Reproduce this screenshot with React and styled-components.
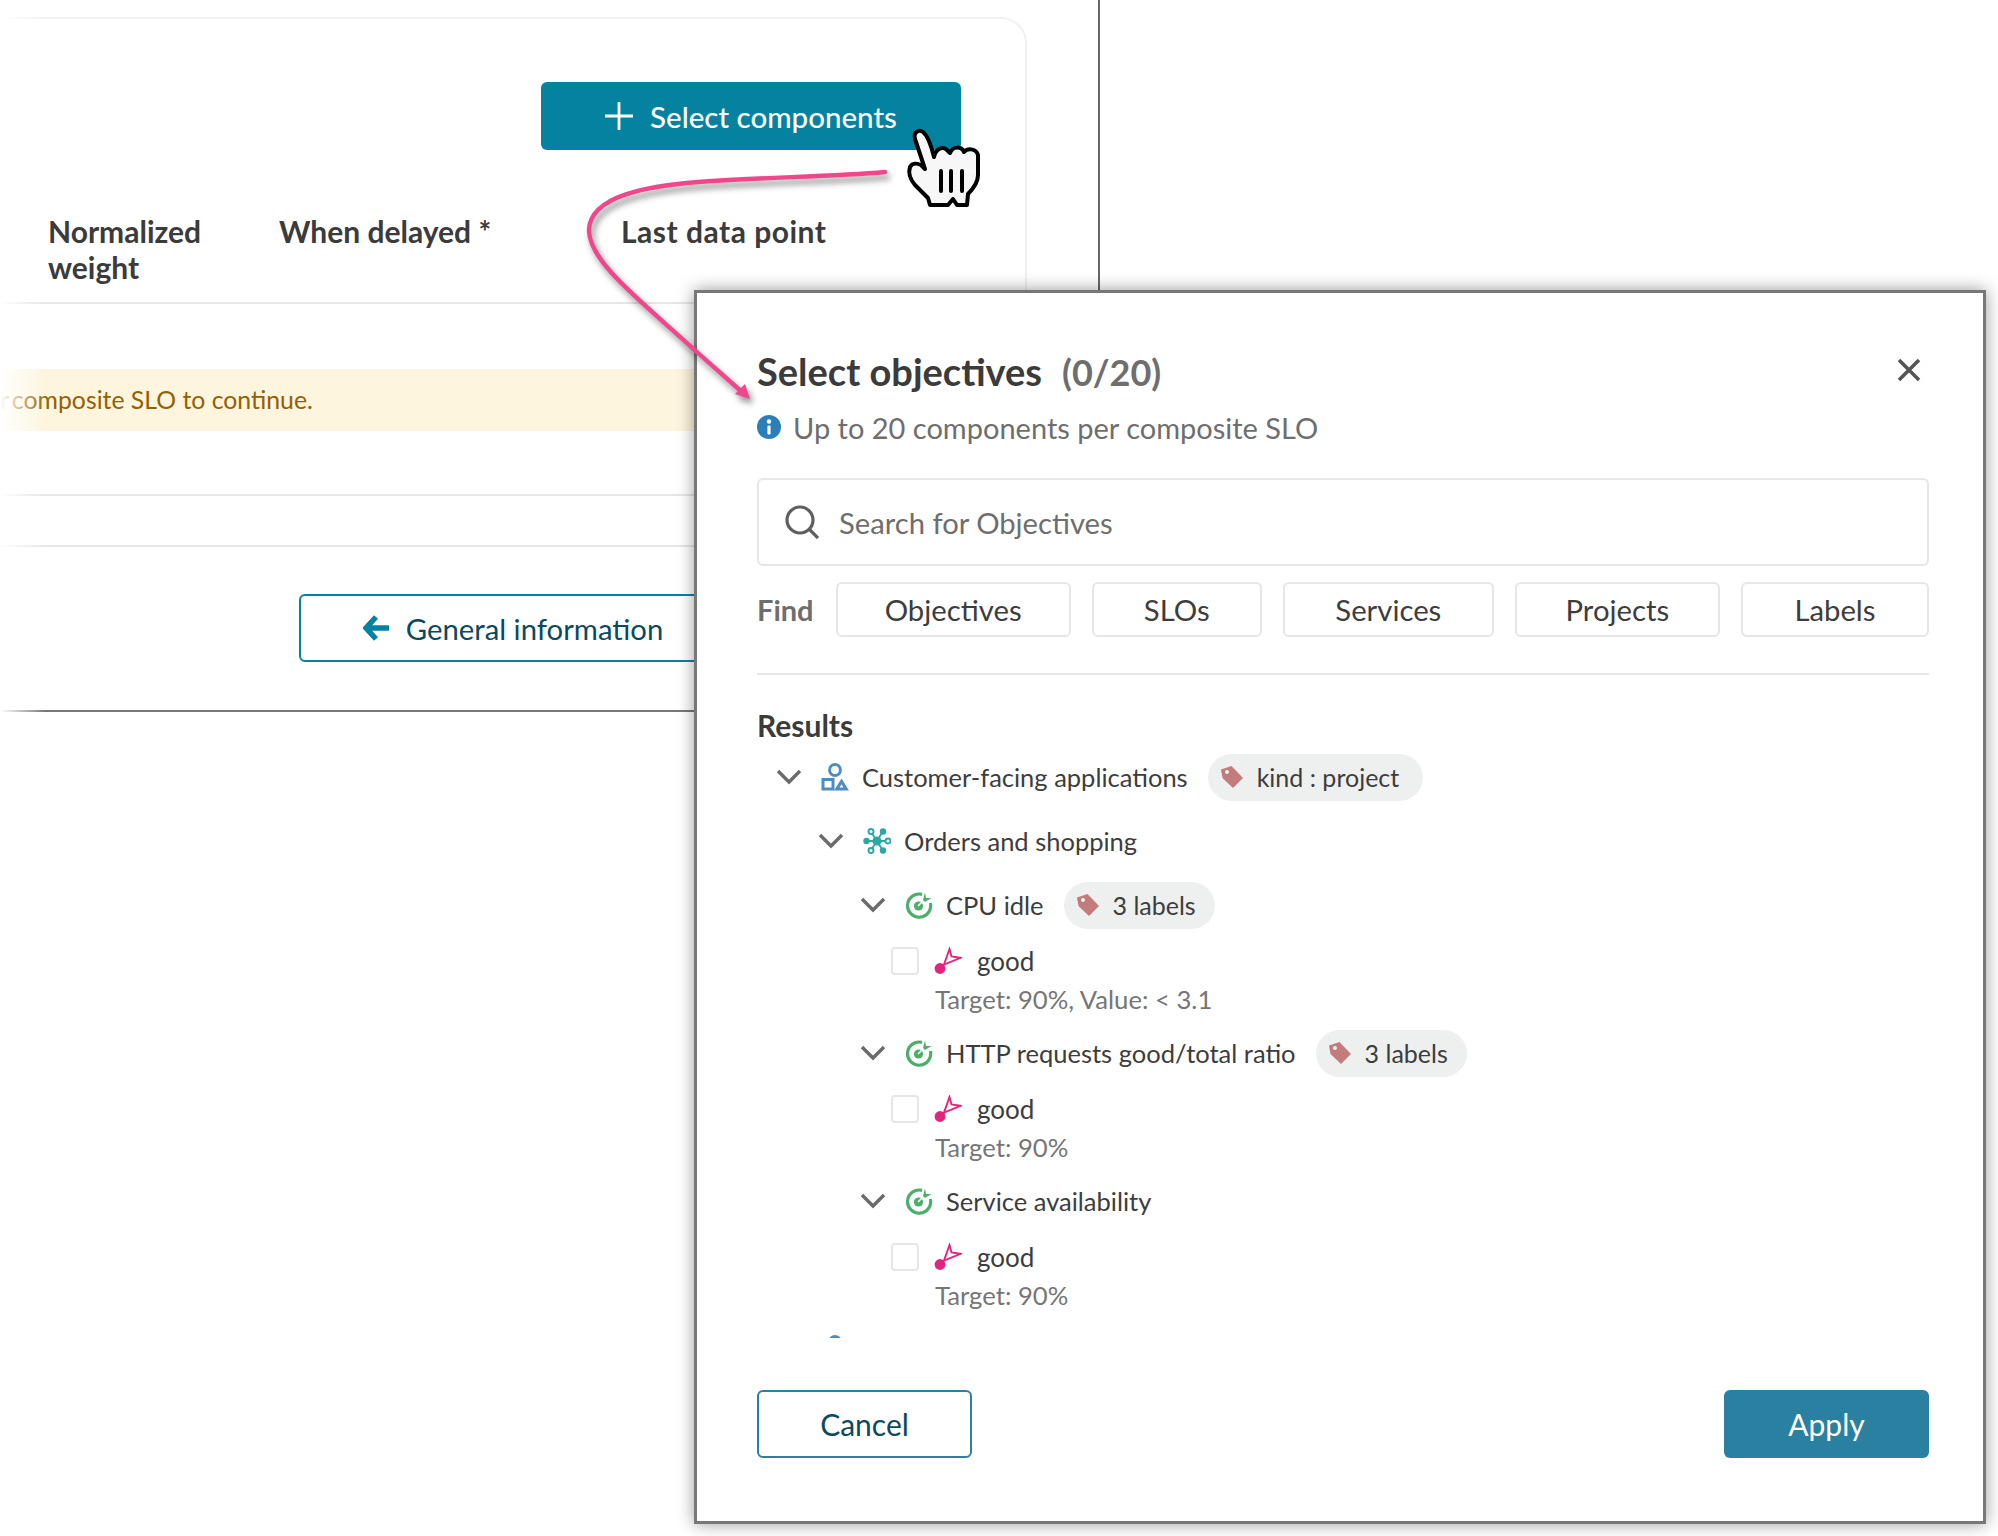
import styled, { createGlobalStyle } from 'styled-components'

const Global = createGlobalStyle`
  html, body {
    margin: 0;
    padding: 0;
    background: #fff;
  }
  * {
    box-sizing: border-box;
  }
  body {
    font-family: "Lato", "Noto Sans", sans-serif;
    color: #3d3d3d;
  }
`

const Page = styled.div`
  position: relative;
  width: 1998px;
  height: 1536px;
  overflow: hidden;
  background: #fff;
`

const Backdrop = styled.div`
  width: 1100px;
  height: 712px;
  padding-top: 17px;
  border-right: 2px solid #666;
  border-bottom: 2px solid #777;
`

const Card = styled.div`
  width: 1027px;
  height: 693px;
  border-top: 2px solid #f2f2f2;
  border-right: 2px solid #f0f0f0;
  border-top-right-radius: 26px;
  display: flex;
  flex-direction: column;
`

const ActionBar = styled.div`
  display: flex;
  justify-content: flex-end;
  padding: 63px 64px 0 0;
`

const PrimaryAdd = styled.div`
  width: 420px;
  height: 68px;
  border-radius: 6px;
  background: #04829f;
  color: #fff;
  font-size: 29.5px;
  font-weight: 500;
  display: flex;
  align-items: center;
  justify-content: center;
  gap: 17px;
`

const TableHead = styled.div`
  display: grid;
  grid-template-columns: 231px 342px 1fr;
  padding: 63px 0 17px 48px;
  border-bottom: 2px solid #e6e6e6;
  font-size: 30px;
  font-weight: 700;
  line-height: 36px;
  color: #3b3b3b;
`

const HeadCell = styled.div`
  letter-spacing: ${(p) => p.$track || 0}px;
`

const Banner = styled.div`
  margin-top: 65px;
  height: 62px;
  padding-bottom: 2px;
  background: #fef5df;
  color: #946000;
  font-size: 24.8px;
  white-space: pre;
  display: flex;
  align-items: center;
`

const BannerCut = styled.span`
  margin-right: -3px;
`

const Rule = styled.div`
  height: 2px;
  background: #e6e6e6;
  margin-top: ${(p) => p.$gap}px;
`

const BackRow = styled.div`
  padding: 47px 0 0 299px;
`

const BackButton = styled.div`
  width: 428px;
  height: 68px;
  border: 2px solid #04829f;
  border-radius: 6px;
  color: #0a4a60;
  font-size: 29.3px;
  display: flex;
  align-items: center;
  justify-content: center;
  gap: 17px;
`

const FadeEdge = styled.div`
  position: absolute;
  left: 0;
  top: 0;
  width: 46px;
  height: 720px;
  background: linear-gradient(90deg, #fff 0%, rgba(255, 255, 255, 0) 100%);
`

const Modal = styled.div`
  position: absolute;
  left: 694px;
  top: 290px;
  width: 1292px;
  height: 1234px;
  padding: 58px 54px 0 60px;
  background: #fff;
  border: 3px solid #777;
  box-shadow: 0 0 16px rgba(0, 0, 0, 0.4);
  display: flex;
  flex-direction: column;
`

const TitleRow = styled.div`
  display: flex;
  align-items: center;
  justify-content: space-between;
  height: 40px;
`

const Title = styled.div`
  font-size: 38px;
  font-weight: 700;
  color: #3b3b3b;
  span {
    margin-left: 20px;
    color: #6e6e6e;
    font-size: 36px;
  }
`

const Close = styled.svg`
  width: 26px;
  height: 26px;
  margin: 0 7px 3px 0;
`

const Hint = styled.div`
  display: flex;
  align-items: center;
  gap: 12px;
  height: 36px;
  margin-top: 18px;
  font-size: 29px;
  color: #6e6e6e;
`

const Search = styled.div`
  height: 88px;
  margin-top: 33px;
  border: 2px solid #e6e6e6;
  border-radius: 6px;
  display: flex;
  align-items: center;
  gap: 20px;
  padding-left: 26px;
  font-size: 29.2px;
  color: #6e6e6e;
`

const FindRow = styled.div`
  height: 55px;
  margin-top: 16px;
  display: flex;
  align-items: stretch;
  gap: 21px;
`

const FindLabel = styled.div`
  font-size: 29px;
  font-weight: 700;
  color: #6e6e6e;
  display: flex;
  align-items: center;
  width: 58px;
`

const Chip = styled.div`
  width: ${(p) => p.$w}px;
  border: 2px solid #e6e6e6;
  border-radius: 6px;
  font-size: 29.3px;
  color: #3d3d3d;
  display: flex;
  align-items: center;
  justify-content: center;
`

const Results = styled.div`
  margin-top: 34px;
  font-size: 30px;
  font-weight: 700;
  line-height: 32px;
  color: #3b3b3b;
`

const Tree = styled.div`
  height: 585px;
  margin-top: 12px;
  overflow: hidden;
`

const Row = styled.div`
  display: flex;
  align-items: center;
  height: 48px;
  margin-top: ${(p) => p.$gap || 0}px;
  padding-left: ${(p) => 18 + p.$level * 42}px;
  font-size: 25.5px;
  color: #3d3d3d;
`

const Chevron = styled.svg`
  width: 28px;
  height: 16px;
  margin-right: 18px;
  flex: none;
`

const NodeIcon = styled.svg`
  width: 28px;
  height: 28px;
  margin-right: 13px;
  flex: none;
`

const TagPill = styled.div`
  height: 47px;
  margin-left: 20px;
  padding: 0 ${(p) => p.$pad}px 0 12px;
  border-radius: 24px;
  background: #eef0ef;
  font-size: 25px;
  display: flex;
  align-items: center;
  gap: 13px;
`

const Sli = styled.div`
  display: flex;
  align-items: center;
  height: 32px;
  margin-top: 16px;
  padding-left: 134px;
  font-size: 26px;
  color: #3d3d3d;
`

const Check = styled.div`
  width: 28px;
  height: 28px;
  border: 2px solid #e6e6e6;
  border-radius: 4px;
  margin-right: 15px;
`

const SliIcon = styled.svg`
  width: 28px;
  height: 28px;
  margin-right: 15px;
`

const Meta = styled.div`
  height: 36px;
  margin-top: 4px;
  padding-left: 178px;
  font-size: 25.7px;
  line-height: 36px;
  color: #767676;
`

const Footer = styled.div`
  margin-top: 52px;
  display: flex;
  justify-content: space-between;
`

const CancelButton = styled.div`
  width: 215px;
  height: 68px;
  border: 2px solid #2a80a0;
  border-radius: 6px;
  font-size: 30px;
  color: #0c4a60;
  display: flex;
  align-items: center;
  justify-content: center;
`

const ApplyButton = styled.div`
  width: 205px;
  height: 68px;
  border-radius: 6px;
  background: #2a80a0;
  font-size: 30px;
  color: #fff;
  display: flex;
  align-items: center;
  justify-content: center;
`

const ArrowLayer = styled.svg`
  position: absolute;
  left: 0;
  top: 0;
  width: 1998px;
  height: 1536px;
  pointer-events: none;
  filter: drop-shadow(3px 5px 3px rgba(0, 0, 0, 0.45));
`

const Hand = styled.svg`
  position: absolute;
  left: 895px;
  top: 115px;
  width: 100px;
  height: 100px;
`

const ChevronDown = () => (
  <Chevron viewBox="0 0 28 16">
    <path d="M3 2l11 11L25 2" fill="none" stroke="#6b6b6b" strokeWidth="3.4" />
  </Chevron>
)

const ProjectIcon = () => (
  <NodeIcon viewBox="0 0 28 28">
    <circle cx="14" cy="7" r="5.4" fill="none" stroke="#4f8dbf" strokeWidth="3" />
    <rect x="2" y="16.5" width="10" height="9.5" fill="none" stroke="#4f8dbf" strokeWidth="3" />
    <path d="M13 27.5l7.5-12 7.5 12z" fill="#4f8dbf" />
    <path d="M18.5 24.5l2-3.2 2 3.2z" fill="#fff" />
  </NodeIcon>
)

const ServiceIcon = () => (
  <NodeIcon viewBox="0 0 28 28">
    <g stroke="#2aa8a4" strokeWidth="1.8">
      <path d="M14 14L8 5M14 14L20 4M14 14L8 23M14 14L20 24M14 14H3M14 14H25" />
    </g>
    <circle cx="14" cy="14" r="4.6" fill="#2aa8a4" />
    <circle cx="3.5" cy="14" r="3.2" fill="#2aa8a4" />
    <circle cx="20" cy="4.5" r="3.2" fill="#2aa8a4" />
    <circle cx="20" cy="23.5" r="3.2" fill="#2aa8a4" />
    <circle cx="8" cy="4.5" r="2.5" fill="#fff" stroke="#2aa8a4" strokeWidth="1.9" />
    <circle cx="8" cy="23.5" r="2.5" fill="#fff" stroke="#2aa8a4" strokeWidth="1.9" />
    <circle cx="25" cy="14" r="2.5" fill="#fff" stroke="#2aa8a4" strokeWidth="1.9" />
  </NodeIcon>
)

const ObjectiveIcon = () => (
  <NodeIcon viewBox="0 0 28 28">
    <path d="M17 3.4A11.6 11.6 0 1 0 25.4 12" fill="none" stroke="#4cae6a" strokeWidth="3.2" />
    <circle cx="13.5" cy="15" r="4.6" fill="#4cae6a" />
    <path d="M13 15l7-7" stroke="#fff" strokeWidth="1.6" />
    <path d="M18 9l2-7.5 1 5.5 5.5 0-6.5 4z" fill="#4cae6a" />
  </NodeIcon>
)

const DartIcon = () => (
  <SliIcon viewBox="0 0 28 28">
    <circle cx="6" cy="21.5" r="5.4" fill="#e0267f" />
    <path d="M5.5 22L10 17.6" stroke="#e0267f" strokeWidth="1.8" />
    <path d="M10 17.6L15.5 2 17.5 9.5 26.5 10.8z" fill="#fff" stroke="#e0267f" strokeWidth="1.9" strokeLinejoin="miter" />
  </SliIcon>
)

const TagIcon = () => (
  <svg viewBox="0 0 24 24" width="24" height="24">
    <path d="M1 4.5L11.5 1 23 13 13 23 2.5 13z" fill="#c27c7c" />
    <circle cx="7" cy="7" r="2" fill="#eef0ef" />
  </svg>
)

const Tag = ({ label, pad }) => (
  <TagPill $pad={pad}>
    <TagIcon />
    {label}
  </TagPill>
)

const Goal = ({ target }) => (
  <>
    <Sli>
      <Check />
      <DartIcon />
      good
    </Sli>
    <Meta>{target}</Meta>
  </>
)

export default function App() {
  return (
    <Page>
      <Global />
      <Backdrop>
        <Card>
          <ActionBar>
            <PrimaryAdd>
              <svg viewBox="0 0 28 28" width="28" height="28">
                <path d="M14 0v28M0 14h28" stroke="#fff" strokeWidth="2.8" />
              </svg>
              Select components
            </PrimaryAdd>
          </ActionBar>
          <TableHead>
            <HeadCell>Normalized<br />weight</HeadCell>
            <HeadCell>When delayed *</HeadCell>
            <HeadCell $track={0.5}>Last data point</HeadCell>
          </TableHead>
          <Banner><BannerCut>r </BannerCut>composite SLO to continue.</Banner>
          <Rule $gap={63} />
          <Rule $gap={49} />
          <BackRow>
            <BackButton>
              <svg viewBox="0 0 26 26" width="26" height="26">
                <path d="M13 2L3 13l10 11M4 13h22" fill="none" stroke="#04829f" strokeWidth="5.5" />
              </svg>
              General information
            </BackButton>
          </BackRow>
        </Card>
      </Backdrop>
      <FadeEdge />

      <Modal>
        <TitleRow>
          <Title>Select objectives<span>(0/20)</span></Title>
          <Close viewBox="0 0 26 26">
            <path d="M3 3l20 20M23 3L3 23" stroke="#555" strokeWidth="3.6" />
          </Close>
        </TitleRow>
        <Hint>
          <svg viewBox="0 0 24 24" width="24" height="24">
            <circle cx="12" cy="12" r="12" fill="#2a7fba" />
            <circle cx="12" cy="6.5" r="2.2" fill="#fff" />
            <rect x="10.4" y="10.5" width="3.2" height="9" rx="1.2" fill="#fff" />
          </svg>
          Up to 20 components per composite SLO
        </Hint>
        <Search>
          <svg viewBox="0 0 34 34" width="34" height="34">
            <circle cx="15" cy="15" r="13" fill="none" stroke="#5f5f5f" strokeWidth="3.2" />
            <path d="M24 24l9 9" stroke="#5f5f5f" strokeWidth="3.2" />
          </svg>
          Search for Objectives
        </Search>
        <FindRow>
          <FindLabel>Find</FindLabel>
          <Chip $w={236}>Objectives</Chip>
          <Chip $w={171}>SLOs</Chip>
          <Chip $w={212}>Services</Chip>
          <Chip $w={206}>Projects</Chip>
          <Chip $w={189}>Labels</Chip>
        </FindRow>
        <Rule $gap={36} />
        <Results>Results</Results>
        <Tree>
          <Row $level={0}>
            <ChevronDown />
            <ProjectIcon />
            Customer-facing applications
            <Tag label="kind : project" pad={24} />
          </Row>
          <Row $level={1} $gap={16}>
            <ChevronDown />
            <ServiceIcon />
            Orders and shopping
          </Row>
          <Row $level={2} $gap={16}>
            <ChevronDown />
            <ObjectiveIcon />
            CPU idle
            <Tag label="3 labels" pad={19} />
          </Row>
          <Goal target="Target: 90%, Value: < 3.1" />
          <Row $level={2} $gap={12}>
            <ChevronDown />
            <ObjectiveIcon />
            HTTP requests good/total ratio
            <Tag label="3 labels" pad={19} />
          </Row>
          <Goal target="Target: 90%" />
          <Row $level={2} $gap={12}>
            <ChevronDown />
            <ObjectiveIcon />
            Service availability
          </Row>
          <Goal target="Target: 90%" />
          <Row $level={0} $gap={12}>
            <Chevron as="span" />
            <ProjectIcon />
          </Row>
        </Tree>
        <Footer>
          <CancelButton>Cancel</CancelButton>
          <ApplyButton>Apply</ApplyButton>
        </Footer>
      </Modal>

      <ArrowLayer viewBox="0 0 1998 1536">
        <path
          d="M885 172C830 177 760 177 698 182 650 186 590 195 589 230 589 262 640 300 698 353L742 392"
          fill="none"
          stroke="#f0478c"
          strokeWidth="4.4"
          strokeLinecap="round"
        />
        <path d="M735 394L745 384 750 399z" fill="#f0478c" />
      </ArrowLayer>

      <Hand viewBox="0 0 100 100">
        <path
          d="M35 90L33 83 20 70C15 64 13 58 15 52 17 48 22 48 26 50L30 54 20 24C18 17 24 14 28 17 33 21 36 30 39 42 41 33 48 31 52 35L55 38C58 31 66 31 69 37 72 33 81 33 83 40L83 60C83 68 78 74 73 79L72 90 62 90 58 84 53 90Z"
          fill="#f7f7f7"
          stroke="#000"
          strokeWidth="4"
          strokeLinejoin="round"
        />
        <path d="M46 56V76M56 56V76M67 56V76" stroke="#000" strokeWidth="4" strokeLinecap="round" />
      </Hand>
    </Page>
  )
}
